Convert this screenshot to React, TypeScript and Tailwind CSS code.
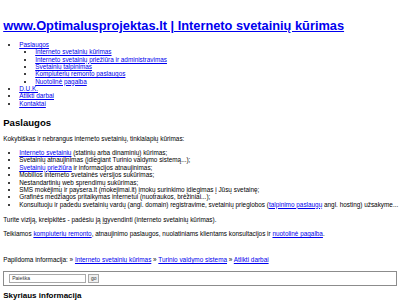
const link = 'text-[#0000ee] underline'

function Menu() {
  return (
    <ul className="mt-[7.2px] list-disc pl-[16px] text-[6.4px] leading-[7.36px]">
      <li>
        <a href="#" className={link}>Paslaugos</a>
        <ul className="list-disc pl-[16px]">
          <li><a href="#" className={link}>Interneto svetainių kūrimas</a></li>
          <li><a href="#" className={link}>Interneto svetainių priežiūra ir administravimas</a></li>
          <li><a href="#" className={link}>Svetainių talpinimas</a></li>
          <li><a href="#" className={link}>Kompiuterių remonto paslaugos</a></li>
          <li><a href="#" className={link}>Nuotolinė pagalba</a></li>
        </ul>
      </li>
      <li><a href="#" className={link}>D.U.K.</a></li>
      <li><a href="#" className={link}>Atlikti darbai</a></li>
      <li><a href="#" className={link}>Kontaktai</a></li>
    </ul>
  )
}

function Services() {
  return (
    <div className="text-[6.4px] leading-[7.36px]">
      <h2 className="mt-[10px] text-[9.6px] font-bold leading-[11px]">Paslaugos</h2>
      <p className="mt-[7px]">Kokybiškas ir nebrangus interneto svetainių, tinklalapių kūrimas:</p>
      <ul className="mt-[6.6px] list-disc pl-[16px]">
        <li>
          <a href="#" className={link}>Interneto svetainių</a> (statinių arba dinaminių) kūrimas;
        </li>
        <li>Svetainių atnaujinimas (įdiegiant Turinio valdymo sistemą...);</li>
        <li>
          <a href="#" className={link}>Svetainių priežiūra</a> ir informacijos atnaujinimas;
        </li>
        <li>Mobilios interneto svetainės versijos sukūrimas;</li>
        <li>Nestandartinių web sprendimų sukūrimas;</li>
        <li>SMS mokėjimų ir paysera.lt (mokejimai.lt) įmokų surinkimo įdiegimas į Jūsų svetainę;</li>
        <li>Grafinės medžiagos pritaikymas internetui (nuotraukos, brėžiniai...);</li>
        <li className="whitespace-nowrap">
          Konsultuoju ir padedu svetainių vardų (angl. domain) registravime, svetainių prieglobos (<a href="#" className={link}>talpinimo paslaugų</a> angl. hosting) užsakyme...
        </li>
      </ul>
      <p className="mt-[8px]">
        Turite viziją, kreipkitės - padėsiu ją įgyvendinti (interneto svetainių kūrimas).
      </p>
      <p className="mt-[6.6px]">
        Teikiamos <a href="#" className={link}>kompiuterių remonto</a>, atnaujinimo paslaugos,
        nuolatiniams klientams konsultacijos ir <a href="#" className={link}>nuotolinė pagalba</a>.
      </p>
      <p className="mt-[18.6px]">
        Papildoma informacija: » <a href="#" className={link}>Interneto svetainių kūrimas</a> »{' '}
        <a href="#" className={link}>Turinio valdymo sistema</a> »{' '}
        <a href="#" className={link}>Atlikti darbai</a>
      </p>
    </div>
  )
}

function Search() {
  return (
    <div className="mt-[8px] flex h-[15px] items-center gap-[2px] border border-solid border-[#8c8c8c] px-[5px]">
      <div className="flex h-[9px] w-[77px] shrink-0 items-center border border-solid border-[#a9a9a9] bg-white px-[2px] text-[5px] text-[#333]">
        Paieška
      </div>
      <div className="flex h-[9px] w-[11px] shrink-0 items-center justify-center border border-solid border-[#a9a9a9] bg-[#f0f0f0] text-[5px] text-[#333]">
        go
      </div>
    </div>
  )
}

export default function App() {
  return (
    <div className="min-h-[300px] bg-white px-[3.2px] pt-[19px] font-['Liberation_Sans',Arial,sans-serif] text-black">
      <h1 className="text-[12.8px] font-bold leading-[14.7px]">
        <a href="#" className={link}>www.Optimalusprojektas.lt | Interneto svetainių kūrimas</a>
      </h1>
      <Menu />
      <Services />
      <Search />
      <h3 className="mt-[4.4px] text-[8px] font-bold leading-[9.2px]">Skyriaus informacija</h3>
    </div>
  )
}
